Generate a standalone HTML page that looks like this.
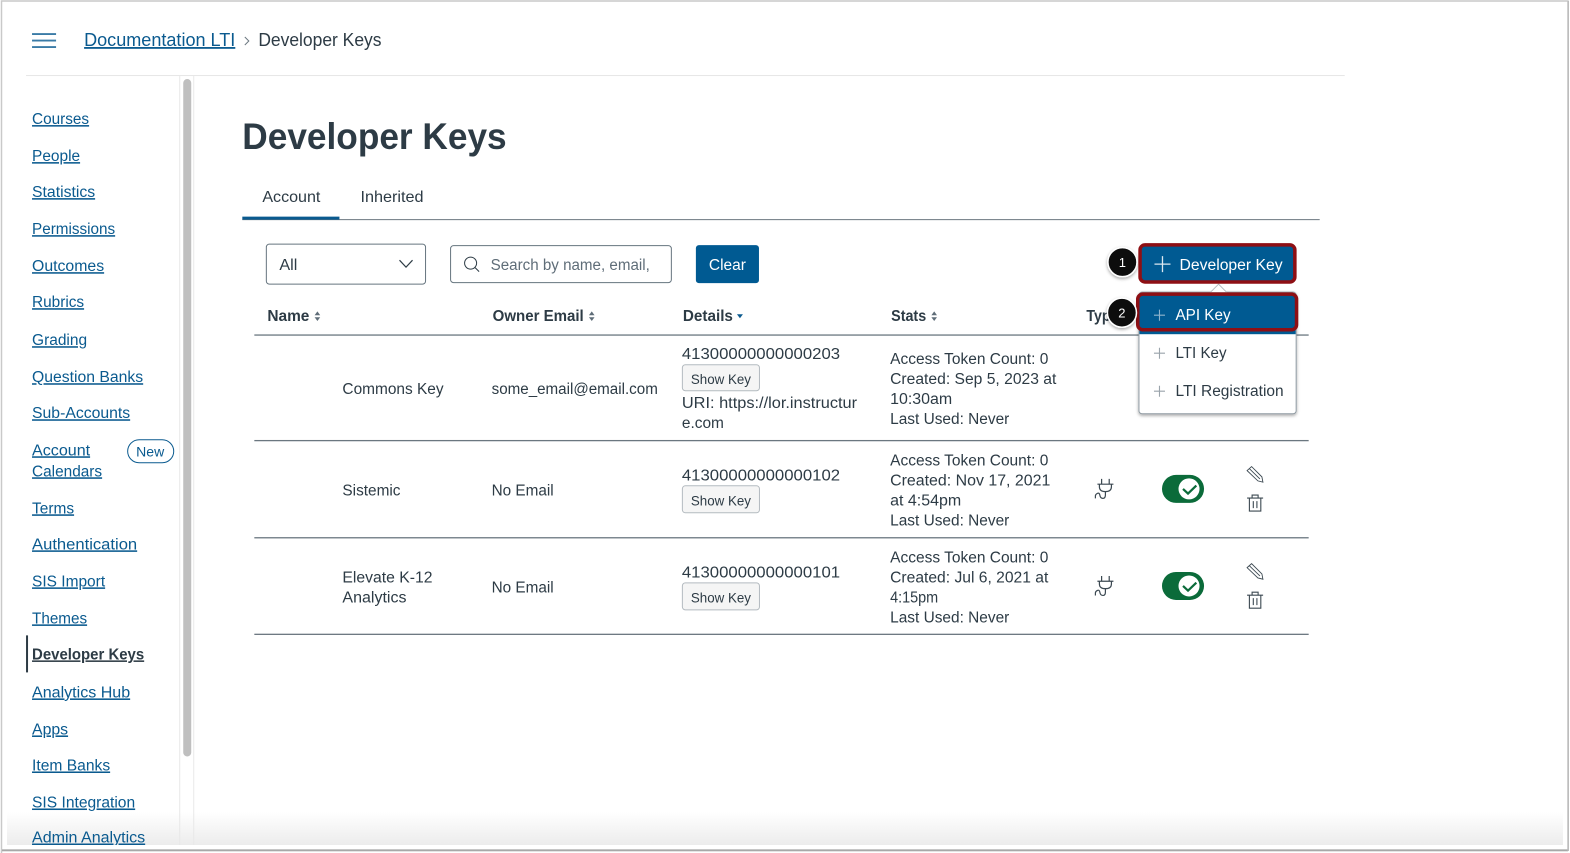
<!DOCTYPE html>
<html><head><meta charset="utf-8"><style>
html,body{margin:0;padding:0;background:#fff;width:1570px;height:853px;overflow:hidden}
svg{display:block;font-family:"Liberation Sans",sans-serif}
text{fill:#2D3B45;font-size:15.5px}
.l{fill:#0A5A8F;font-size:15.5px;text-decoration:underline}
.g{fill:#5f6d78}
.b{font-weight:bold;font-size:15.5px}
.w{fill:#fff}
</style></head><body>
<svg width="1570" height="853" viewBox="0 0 1570 853" xmlns="http://www.w3.org/2000/svg">
<defs><linearGradient id="fade" x1="0" y1="0" x2="0" y2="1"><stop offset="0" stop-color="#fff"/><stop offset="1" stop-color="#ececec"/></linearGradient>
<g id="pl"><path d="M-5.5 0H5.5M0-5.5V5.5" stroke-width="1.1" fill="none"/></g>
<g id="sort"><path d="M-2.8-1 0-4.8 2.8-1ZM-2.8 1 0 4.8 2.8 1Z" fill="#5f6d78"/></g>
<g id="plug" fill="none" stroke="#3c4952" stroke-width="1.2"><path d="M-3.800-10V-5M3.800-10V-5M-8-4.700H8M-6-4.700V-2Q-6 2.700 0 2.700Q6 2.700 6-2V-4.700M0 2.700V6Q0 9.500-2.500 9.500T-5.500 6.500T-8 4.500T-10 7V9.500"/></g>
<g id="acts" fill="none" stroke="#3c4952" stroke-width=".9"><path d="M-8-4-3.500-8 6.800 2.300 7.800 7.600 2.800 6.300ZM-5.800-6 4.800 4.300"/><path d="M-8 23.500H8M-3 23V20.500H3V23M-5.700 23.500V36.500H5.700V23.500M-1.800 26.500V33.500M1.800 26.500V33.500" stroke-width="1.100"/></g>
<g id="tog"><rect x="-21" y="-14" width="42" height="28" rx="14" fill="#0B6B3A"/><circle cx="6" cy="0" r="10.500" fill="#fff"/><path d="M0 0 5 4.700 13.300-3.300" fill="none" stroke="#0B6B3A" stroke-width="2.200"/></g>
<filter id="sh" x="-30%" y="-30%" width="160%" height="170%"><feDropShadow dx="0" dy="1.500" stdDeviation="1.500" flood-color="#000" flood-opacity=".35"/></filter>
</defs>
<rect width="1570" height="853" fill="#fff"/>
<rect x="7" y="812" width="1556" height="33" fill="url(#fade)"/>

<g transform="scale(1.00128,1.0006)">
<!-- header -->
<path d="M32 34H56M32 40.500H56M32 47H56" stroke="#3a7ba6" stroke-width="1.900"/>
<text class="l" x="84" y="46" style="font-size:18px" lengthAdjust="spacingAndGlyphs" textLength="151">Documentation LTI</text>
<path d="M244.500 37 248.500 41 244.500 45" fill="none" stroke="#6b7780" stroke-width="1"/>
<text x="258" y="46" style="font-size:18px" lengthAdjust="spacingAndGlyphs" textLength="123">Developer Keys</text>
<rect x="26" y="75" width="1317" height="1" fill="#e6e6e6"/>
<rect x="179" y="76" width="1" height="770" fill="#e8e8e8"/>
<rect x="193" y="76" width="1" height="770" fill="#e8e8e8"/>
<rect x="183" y="79" width="8" height="677" rx="4" fill="#bfbfbf"/>

<!-- sidebar -->
<text class="l" x="32" y="124" lengthAdjust="spacingAndGlyphs" textLength="57">Courses</text>
<text class="l" x="32" y="161" lengthAdjust="spacingAndGlyphs" textLength="48">People</text>
<text class="l" x="32" y="197" lengthAdjust="spacingAndGlyphs" textLength="63">Statistics</text>
<text class="l" x="32" y="234" lengthAdjust="spacingAndGlyphs" textLength="83">Permissions</text>
<text class="l" x="32" y="271" lengthAdjust="spacingAndGlyphs" textLength="72">Outcomes</text>
<text class="l" x="32" y="307" lengthAdjust="spacingAndGlyphs" textLength="52">Rubrics</text>
<text class="l" x="32" y="345" lengthAdjust="spacingAndGlyphs" textLength="55">Grading</text>
<text class="l" x="32" y="382" lengthAdjust="spacingAndGlyphs" textLength="111">Question Banks</text>
<text class="l" x="32" y="418" lengthAdjust="spacingAndGlyphs" textLength="98">Sub-Accounts</text>
<text class="l" x="32" y="455" lengthAdjust="spacingAndGlyphs" textLength="58">Account</text>
<text class="l" x="32" y="476" lengthAdjust="spacingAndGlyphs" textLength="70">Calendars</text>
<rect x="127.500" y="439.500" width="46" height="23" rx="11.500" fill="#fff" stroke="#0A5A8F" stroke-width="1"/>
<text x="136" y="456" style="font-size:14px;fill:#0A5A8F" lengthAdjust="spacingAndGlyphs" textLength="28">New</text>
<text class="l" x="32" y="513" lengthAdjust="spacingAndGlyphs" textLength="42">Terms</text>
<text class="l" x="32" y="549" lengthAdjust="spacingAndGlyphs" textLength="105">Authentication</text>
<text class="l" x="32" y="586" lengthAdjust="spacingAndGlyphs" textLength="73">SIS Import</text>
<text class="l" x="32" y="623" lengthAdjust="spacingAndGlyphs" textLength="55">Themes</text>
<rect x="26" y="635" width="2" height="37" fill="#2D3B45"/>
<text class="l" x="32" y="659" style="fill:#2D3B45;font-weight:bold" lengthAdjust="spacingAndGlyphs" textLength="112">Developer Keys</text>
<text class="l" x="32" y="697" lengthAdjust="spacingAndGlyphs" textLength="98">Analytics Hub</text>
<text class="l" x="32" y="734" lengthAdjust="spacingAndGlyphs" textLength="36">Apps</text>
<text class="l" x="32" y="770" lengthAdjust="spacingAndGlyphs" textLength="78">Item Banks</text>
<text class="l" x="32" y="807" lengthAdjust="spacingAndGlyphs" textLength="103">SIS Integration</text>
<text class="l" x="32" y="842" lengthAdjust="spacingAndGlyphs" textLength="113">Admin Analytics</text>

<!-- title -->
<text x="242" y="149" style="font-size:37px;font-weight:bold" lengthAdjust="spacingAndGlyphs" textLength="264">Developer Keys</text>
<text x="262" y="202" style="font-size:16px" lengthAdjust="spacingAndGlyphs" textLength="58">Account</text>
<text x="360" y="202" style="font-size:16px" lengthAdjust="spacingAndGlyphs" textLength="63">Inherited</text>
<rect x="242" y="219" width="1076" height="1" fill="#6b7780"/>
<rect x="242" y="216.500" width="97" height="3" fill="#0A5A8F"/>

<!-- filters -->
<rect x="266" y="244" width="159" height="40" rx="3" fill="#fff" stroke="#66757f"/>
<text x="279" y="270" lengthAdjust="spacingAndGlyphs" textLength="18">All</text>
<path d="M399 260 405.500 267 412 260" fill="none" stroke="#2D3B45" stroke-width="1.200"/>
<rect x="450" y="245.500" width="220.500" height="37" rx="3" fill="#fff" stroke="#66757f"/>
<circle cx="470" cy="263" r="6" fill="none" stroke="#2D3B45" stroke-width="1"/>
<path d="M474.500 267.500 478.500 271.500" stroke="#2D3B45" stroke-width="1"/>
<text class="g" x="490" y="270" lengthAdjust="spacingAndGlyphs" textLength="159">Search by name, email,</text>
<rect x="695" y="245" width="63" height="38" rx="3" fill="#005A92"/>
<text class="w" x="708" y="270" lengthAdjust="spacingAndGlyphs" textLength="37">Clear</text>

<!-- table headers -->
<text class="b" x="267" y="321" lengthAdjust="spacingAndGlyphs" textLength="42">Name</text><use href="#sort" x="317" y="316"/>
<text class="b" x="492" y="321" lengthAdjust="spacingAndGlyphs" textLength="91">Owner Email</text><use href="#sort" x="591" y="316"/>
<text class="b" x="682" y="321" lengthAdjust="spacingAndGlyphs" textLength="50">Details</text><path d="M736 314H742L739 318Z" fill="#0A5A8F"/>
<text class="b" x="890" y="321" lengthAdjust="spacingAndGlyphs" textLength="35">Stats</text><use href="#sort" x="933" y="316"/>
<text class="b" x="1085" y="321" lengthAdjust="spacingAndGlyphs" textLength="32">Type</text>
<rect x="254" y="334.200" width="1053" height="1.300" fill="#6b7780"/>
<rect x="254" y="439.700" width="1053" height="1.300" fill="#6b7780"/>
<rect x="254" y="536.800" width="1053" height="1.300" fill="#6b7780"/>
<rect x="254" y="633.300" width="1053" height="1.300" fill="#6b7780"/>

<!-- row 1 -->
<text x="342" y="394" lengthAdjust="spacingAndGlyphs" textLength="101">Commons Key</text>
<text x="491" y="394" lengthAdjust="spacingAndGlyphs" textLength="166">some_email@email.com</text>
<text x="681" y="359" lengthAdjust="spacingAndGlyphs" textLength="158">41300000000000203</text>
<rect x="681.500" y="364.500" width="77" height="26" rx="3" fill="#F5F5F5" stroke="#b4bbc0"/>
<text x="690" y="384" style="font-size:14px" lengthAdjust="spacingAndGlyphs" textLength="60">Show Key</text>
<text x="681" y="408" lengthAdjust="spacingAndGlyphs" textLength="175">URI: https://lor.instructur</text>
<text x="681" y="428" lengthAdjust="spacingAndGlyphs" textLength="42">e.com</text>
<text x="889" y="364" lengthAdjust="spacingAndGlyphs" textLength="158">Access Token Count: 0</text>
<text x="889" y="384" lengthAdjust="spacingAndGlyphs" textLength="166">Created: Sep 5, 2023 at</text>
<text x="889" y="404" lengthAdjust="spacingAndGlyphs" textLength="62">10:30am</text>
<text x="889" y="424" lengthAdjust="spacingAndGlyphs" textLength="119">Last Used: Never</text>

<!-- row 2 -->
<text x="342" y="495" lengthAdjust="spacingAndGlyphs" textLength="58">Sistemic</text>
<text x="491" y="495" lengthAdjust="spacingAndGlyphs" textLength="62">No Email</text>
<text x="681" y="480" lengthAdjust="spacingAndGlyphs" textLength="158">41300000000000102</text>
<rect x="681.500" y="485.500" width="77" height="27" rx="3" fill="#F5F5F5" stroke="#b4bbc0"/>
<text x="690" y="505" style="font-size:14px" lengthAdjust="spacingAndGlyphs" textLength="60">Show Key</text>
<text x="889" y="465" lengthAdjust="spacingAndGlyphs" textLength="158">Access Token Count: 0</text>
<text x="889" y="485" lengthAdjust="spacingAndGlyphs" textLength="160">Created: Nov 17, 2021</text>
<text x="889" y="505" lengthAdjust="spacingAndGlyphs" textLength="71">at 4:54pm</text>
<text x="889" y="525" lengthAdjust="spacingAndGlyphs" textLength="119">Last Used: Never</text>
<use href="#plug" x="1104" y="488.600"/>
<use href="#tog" x="1181.500" y="488.600"/>
<use href="#acts" x="1253.500" y="474.300"/>

<!-- row 3 -->
<text x="342" y="582" lengthAdjust="spacingAndGlyphs" textLength="90">Elevate K-12</text>
<text x="342" y="602" lengthAdjust="spacingAndGlyphs" textLength="64">Analytics</text>
<text x="491" y="592" lengthAdjust="spacingAndGlyphs" textLength="62">No Email</text>
<text x="681" y="577" lengthAdjust="spacingAndGlyphs" textLength="158">41300000000000101</text>
<rect x="681.500" y="582.500" width="77" height="27" rx="3" fill="#F5F5F5" stroke="#b4bbc0"/>
<text x="690" y="602" style="font-size:14px" lengthAdjust="spacingAndGlyphs" textLength="60">Show Key</text>
<text x="889" y="562" lengthAdjust="spacingAndGlyphs" textLength="158">Access Token Count: 0</text>
<text x="889" y="582" lengthAdjust="spacingAndGlyphs" textLength="158">Created: Jul 6, 2021 at</text>
<text x="889" y="602" lengthAdjust="spacingAndGlyphs" textLength="48">4:15pm</text>
<text x="889" y="622" lengthAdjust="spacingAndGlyphs" textLength="119">Last Used: Never</text>
<use href="#plug" x="1104" y="585.600"/>
<use href="#tog" x="1181.500" y="585.600"/>
<use href="#acts" x="1253.500" y="571.300"/>

<!-- dropdown -->
<rect x="1137.500" y="292" width="157" height="121.500" rx="3" fill="#fff" stroke="#8f9aa2" filter="url(#sh)"/>
<path d="M1209 292 1217 284 1225 292" fill="#fff" stroke="#b4bbc0"/>
<rect x="1138" y="297" width="156" height="37" fill="#005A92"/>
<rect x="1136.300" y="294" width="158.600" height="35.500" rx="5" fill="#005A92" stroke="#8E0F14" stroke-width="3.500"/>
<use href="#pl" x="1158" y="315" stroke="#8fb4cd"/>
<text class="w" x="1174" y="320" lengthAdjust="spacingAndGlyphs" textLength="55">API Key</text>
<use href="#pl" x="1158" y="353" stroke="#9aa4ab"/>
<text x="1174" y="358" lengthAdjust="spacingAndGlyphs" textLength="51">LTI Key</text>
<use href="#pl" x="1158" y="391" stroke="#9aa4ab"/>
<text x="1174" y="396" lengthAdjust="spacingAndGlyphs" textLength="108">LTI Registration</text>

<!-- developer key button -->
<rect x="1138.600" y="244.700" width="154.600" height="37.100" rx="5" fill="#005A92" stroke="#8E0F14" stroke-width="3.500"/>
<path d="M1153 264H1169M1161 256V272" stroke="#dce8f0" stroke-width="1.300"/>
<text class="w" x="1178" y="270" lengthAdjust="spacingAndGlyphs" textLength="103">Developer Key</text>

<!-- callouts -->
<circle cx="1121" cy="262" r="14.500" fill="#0b0b0b" stroke="#fff" stroke-width="1.500" filter="url(#sh)"/>
<text class="w" x="1121" y="267" text-anchor="middle" style="font-size:13px">1</text>
<circle cx="1120.500" cy="312.500" r="14.500" fill="#0b0b0b" stroke="#fff" stroke-width="1.500" filter="url(#sh)"/>
<text class="w" x="1120.500" y="317.500" text-anchor="middle" style="font-size:13px">2</text>
</g>

<rect x="7" y="845" width="1556" height="4.500" fill="#fff"/>
<path d="M1.500 853V1H1568V850H2" fill="none" stroke="#c9c9c9" stroke-width="1.500"/>
<rect x="2" y="849.500" width="1566" height="1.800" fill="#a8a8a8"/>
<rect x="1567.500" y="1" width="1.500" height="850" fill="#bdbdbd"/>
</svg>
</body></html>
